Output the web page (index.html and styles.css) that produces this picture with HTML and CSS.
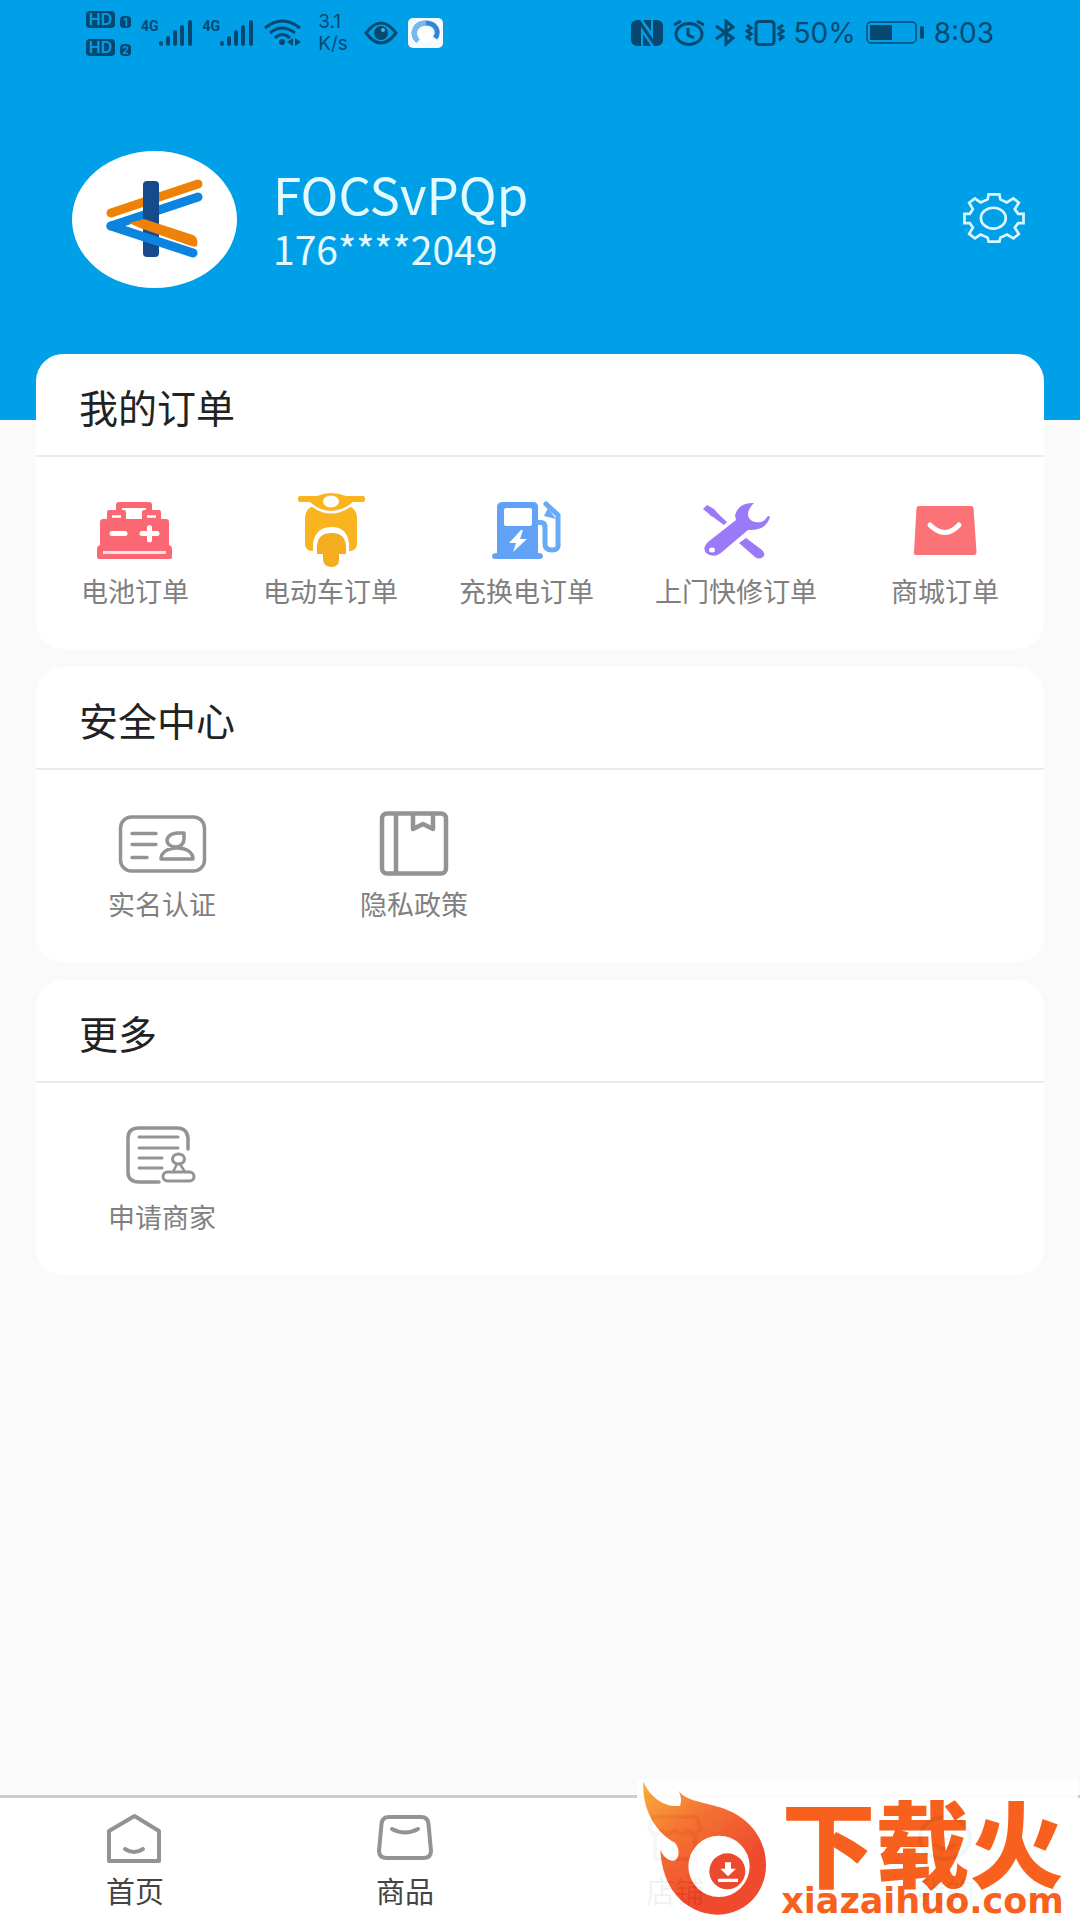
FILE: index.html
```html
<!DOCTYPE html>
<html lang="zh-CN">

<head>
    <meta charset="UTF-8">
    <meta name="viewport" content="width=device-width, initial-scale=1.0">
    <title>我的</title>
    <link rel="stylesheet" href="styles.css">
</head>

<body>
    <header class="header">
        <div class="status-bar">
            <div class="status-left">
                <div class="hd-list">
                    <div class="hd-row"><span class="hd">HD</span><span class="sim">1</span></div>
                    <div class="hd-row"><span class="hd">HD</span><span class="sim">2</span></div>
                </div>
                <div class="signal">
                    <span class="net">4G</span>
                    <svg width="34" height="26" viewBox="0 0 34 26" fill="currentColor">
                        <rect x="0" y="21" width="4" height="5" rx="2" />
                        <rect x="7" y="16" width="4" height="10" rx="2" />
                        <rect x="14" y="10" width="4" height="16" rx="2" />
                        <rect x="21" y="5" width="4" height="21" rx="2" />
                        <rect x="29" y="0" width="4" height="26" rx="2" />
                    </svg>
                </div>
                <div class="signal">
                    <span class="net">4G</span>
                    <svg width="34" height="26" viewBox="0 0 34 26" fill="currentColor">
                        <rect x="0" y="21" width="4" height="5" rx="2" />
                        <rect x="7" y="16" width="4" height="10" rx="2" />
                        <rect x="14" y="10" width="4" height="16" rx="2" />
                        <rect x="21" y="5" width="4" height="21" rx="2" />
                        <rect x="29" y="0" width="4" height="26" rx="2" />
                    </svg>
                </div>
                <svg class="wifi" width="38" height="28" viewBox="0 0 38 28" fill="none" stroke="currentColor" stroke-width="3">
                    <path d="M1 9 Q18 -5 36 9" />
                    <path d="M6 14 Q18 4 31 14" />
                    <path d="M11 19 Q18 12 26 19" />
                    <circle cx="18" cy="23" r="3" fill="currentColor" stroke="none" />
                    <path d="M29 19 v8 l-6 -4z M31 19 v8 l6 -4z" fill="currentColor" stroke="none" />
                </svg>
                <div class="speed">3.1<br>K/s</div>
                <svg class="eye" width="34" height="24" viewBox="0 0 34 24">
                    <path d="M2 12 Q17 -8 32 12 Q17 32 2 12z" fill="none" stroke="currentColor" stroke-width="3" />
                    <circle cx="17" cy="12" r="7" fill="currentColor" />
                    <circle cx="19" cy="9" r="2" fill="#4cb4e4" />
                </svg>
                <svg class="app" width="35" height="30" viewBox="0 0 35 30">
                    <rect width="35" height="30" rx="5" fill="#f4fafe" />
                    <path d="M10 23 C2 15 8 5 18 5 S32 14 27 20" fill="none" stroke="#2f86dc" stroke-width="5" />
                    <path d="M10 23 C2 15 8 5 18 5" fill="none" stroke="#79b8ef" stroke-width="5" />
                    <circle cx="17" cy="17" r="7" fill="#fff" />
                </svg>
            </div>
            <div class="status-right">
                <svg width="32" height="26" viewBox="0 0 32 26">
                    <path d="M6 0 H9 L22 19 V0 H26 Q32 1 32 6 V20 Q32 25 26 26 H23 L10 7 V26 H6 Q0 25 0 20 V6 Q0 1 6 0z M12 0 H20 V11z M12 14 L20 26 H12z" fill="currentColor" />
                </svg>
                <svg width="32" height="26" viewBox="0 0 32 26" fill="none" stroke="currentColor" stroke-width="3">
                    <ellipse cx="16" cy="14" rx="13" ry="10.5" />
                    <path d="M15 8 V15 L21 18 M1 5 L8 1 M24 1 L31 5" />
                </svg>
                <svg width="20" height="28" viewBox="0 0 20 28" fill="none" stroke="currentColor" stroke-width="3">
                    <path d="M1 7 L18 19 L11 25 V2 L18 8 L1 20" />
                </svg>
                <svg class="vibrate" width="40" height="26" viewBox="0 0 40 26" fill="none" stroke="currentColor" stroke-width="3">
                    <rect x="11" y="1.5" width="18" height="23" rx="3" />
                    <path d="M2 5 l4 3 l-4 3 l4 3 l-4 3 l4 3 M38 5 l-4 3 l4 3 l-4 3 l4 3 l-4 3" />
                </svg>
                <span class="percent">50%</span>
                <svg class="battery" width="58" height="24" viewBox="0 0 58 24">
                    <rect x="1" y="1" width="49" height="21" rx="4" fill="none" stroke="currentColor" stroke-width="1.5" />
                    <rect x="4" y="4" width="22" height="15" fill="currentColor" />
                    <rect x="54" y="5" width="4" height="13" rx="2" fill="currentColor" />
                </svg>
                <span>8:03</span>
            </div>
        </div>

        <div class="profile">
            <svg class="avatar" viewBox="0 0 165 137">
                <ellipse cx="82.5" cy="68.5" rx="82.5" ry="68.5" fill="#fff" />
                <g fill="none" stroke-width="9" stroke-linecap="round">
                    <path d="M39 75 L126 46" stroke="#0a84dc" />
                    <path d="M39 63 L126 34" stroke="#fff" stroke-width="11" />
                    <path d="M39 62 L126 33" stroke="#ee8108" />
                    <rect x="71" y="30" width="16" height="76" rx="4" fill="#154a8c" />
                    <path d="M39 75 L121 102" stroke="#0a84dc" />
                    <path d="M57 72 L72 68 L121 84 Q127 87 125 95 Q123 96 119 95 L68 77z" fill="#ee8108" />
                </g>
            </svg>
            <div class="user">
                <h1 class="user-name">FOCSvPQp</h1>
                <p class="user-phone">176****2049</p>
            </div>
            <button class="settings" type="button" aria-label="设置">
                <svg viewBox="72 68 184 149" fill="none" stroke="#d9f8ff" stroke-width="8">
                    <path d="M148 72 H180 L183 87 L202 96 L222 84 L238 97 L226 116 L236 130 H252 V158 H236 L226 171 L238 190 L222 203 L203 192 L183 201 L180 213 H148 L145 201 L124 192 L107 203 L90 190 L101 171 L92 158 H76 V130 H92 L101 116 L90 97 L107 84 L124 96 L145 87z" />
                    <ellipse cx="162" cy="143" rx="37" ry="31" />
                </svg>
            </button>
        </div>
    </header>

    <main class="content">
        <section class="card">
            <h2 class="card-title">我的订单</h2>
            <div class="orders">
                <a class="item" href="#">
                    <svg class="icon" viewBox="-5 0 90 76">
                        <path d="M24 24 V14 H54 V24" fill="none" stroke="#fa6672" stroke-width="6" stroke-linejoin="round" />
                        <path d="M12 21 q0-2 2-2 H29 q2 0 2 2 V28 H47 V21 q0-2 2-2 H64 q2 0 2 2 V28 H71 q3 0 3 3 V54 q3 1 3 4 V66 q0 2-2 2 H4 q-2 0-2-2 V58 q0-3 3-4 V31 q0-3 3-3 H12z" fill="#fb6874" />
                        <path d="M17 25.500 H26 M52 25.500 H61" stroke="#fff" stroke-width="2.500" />
                        <path d="M17 42.500 H30 M47 42.500 H62 M54.500 36.500 V49" stroke="#fff" stroke-width="5" stroke-linecap="round" />
                        <path d="M8 61.500 H71" stroke="#ffe3e5" stroke-width="3" />
                    </svg>
                    <span>电池订单</span>
                </a>
                <a class="item" href="#">
                    <svg class="icon" viewBox="-5 0 90 76">
                        <path d="M22 15 H58 Q66 18 66 28 V54 Q65 60 58 60 V52 Q56 36 40.500 36 T22 52 V60 Q15 60 14 54 V28 Q14 18 22 15z" fill="#f9b420" />
                        <path d="M9 5 H26 Q33 2 40 2 T55 5 H72 Q74 5 74 8 T72 11 H62 Q51 20 40 20 T19 11 H9 Q7 11 7 8 T9 5z" fill="#f9b420" stroke="#fff" stroke-width="5" paint-order="stroke" />
                        <ellipse cx="40" cy="10.500" rx="8" ry="6" fill="#fff" />
                        <path d="M26 63 V55 Q27 42 40.500 42 T55 55 V63 H48 V69 Q48 76 40.500 76 T32 69 V63z" fill="#f4ac20" />
                    </svg>
                    <span>电动车订单</span>
                </a>
                <a class="item" href="#">
                    <svg class="icon" viewBox="-5 0 90 76">
                        <path d="M10 62 V16 Q10 11 16 11 H46 Q51 11 51 16 V62 Q56 62 56 65 T52 68 H8 Q5 68 5 65 T10 62z" fill="#62a2f6" />
                        <rect x="17" y="17" width="28" height="18" rx="2" fill="#fff" />
                        <path d="M34 39 L22 52 H29 L26 61 L40 48 H33 L36 39z" fill="#fff" />
                        <path d="M51 31.500 H54 Q58 31.500 58 37 V53 Q58 59 65 59 T71 53 V24 L59 13" fill="none" stroke="#67aaf5" stroke-width="5" stroke-linecap="round" />
                        <path d="M61 17 L57 25 L69 28" fill="#67aaf5" />
                    </svg>
                    <span>充换电订单</span>
                </a>
                <a class="item" href="#">
                    <svg class="icon" viewBox="-5 0 90 76" fill="#9a7af8">
                        <path d="M7 18 L11 14 L18 18 Q22 23 31 31 L28 34 L17 26 Q14 25 13 23z" />
                        <path d="M50 47 L66 59 Q70 63 67 66 Q63 69 59 66 L43 52z" />
                        <path d="M58 12 Q43 11 39 24 L40 29 L12 51 Q6 57 10 62 Q18 68 26 61 L52 39 Q70 40 74 26 Q73 24 71 26 C68 31 64 32 59 31 C51 29 49 21 58 12z" />
                        <ellipse cx="16" cy="59" rx="3" ry="2.500" fill="#fff" />
                    </svg>
                    <span>上门快修订单</span>
                </a>
                <a class="item" href="#">
                    <svg class="icon" viewBox="-5 0 90 76">
                        <path d="M14 15 H66 Q68 15 68.500 17 L71.500 61 Q71.500 64 69 64 H11 Q8.500 64 9 61 L11.500 17 Q12 15 14 15z" fill="#fb7376" />
                        <path d="M25 34 Q40 49 54 34" fill="none" stroke="#fff" stroke-width="5" stroke-linecap="round" />
                    </svg>
                    <span>商城订单</span>
                </a>
            </div>
        </section>

        <section class="card">
            <h2 class="card-title">安全中心</h2>
            <div class="grid">
                <a class="item" href="#">
                    <svg class="icon line-icon" viewBox="0 0 90 76">
                        <rect x="3.500" y="13" width="84" height="54" rx="11" />
                        <path d="M15 29.500 H39 M15 40.500 H39 M15 53.500 H30" />
                        <path d="M67 29 H61 C54 29 50 33 50 36.500 S54 43 59 43 S67 39 67 35z M44 55 C44 48 51 44 60 44 S76 48 76 55z" />
                    </svg>
                    <span>实名认证</span>
                </a>
                <a class="item" href="#">
                    <svg class="icon line-icon" viewBox="0 0 90 76">
                        <rect x="13" y="9.500" width="64" height="60" rx="5" stroke-width="4.500" />
                        <path d="M27 10 V69 M44 10 V25 L54 20 L64 25 V10" stroke-width="4.500" />
                    </svg>
                    <span>隐私政策</span>
                </a>
            </div>
        </section>

        <section class="card">
            <h2 class="card-title">更多</h2>
            <div class="grid">
                <a class="item" href="#">
                    <svg class="icon line-icon" viewBox="0 0 90 76">
                        <path d="M71 32 V21 Q70 11 60 11 H22 Q11 11 11 21 V55 Q11 65 22 65 H42" />
                        <path d="M22 20 H61 M22 31 H61 M22 41 H45 M22 51 H45" stroke-width="3" />
                        <ellipse cx="61.500" cy="42" rx="6" ry="5" stroke-width="3" />
                        <path d="M60 47 L56 55 M63 47 L68 55" stroke-width="2.500" />
                        <rect x="46" y="55" width="31" height="9" rx="4.500" stroke-width="3" />
                    </svg>
                    <span>申请商家</span>
                </a>
            </div>
        </section>
    </main>

    <nav class="tab-bar">
        <a class="tab" href="#">
            <svg class="tab-icon" viewBox="0 0 60 56">
                <path d="M29.500 6 L54 21 V51 H4 V21z" />
                <path d="M20 39 Q29 45 38 39" />
            </svg>
            <span>首页</span>
        </a>
        <a class="tab" href="#">
            <svg class="tab-icon" viewBox="0 0 60 56">
                <path d="M14 7 H46 Q53 7 53.500 14 L56 41 Q56 48 48 48 H12 Q4 48 4 41 L6.500 14 Q7 7 14 7z" />
                <path d="M17 19 Q30 26 43 19" />
            </svg>
            <span>商品</span>
        </a>
        <a class="tab" href="#">
            <svg class="tab-icon" viewBox="0 0 60 56">
                <path d="M8 7 H52 L56 19 Q49 28 43 20 Q36 28 30 20 Q23 28 17 20 Q10 28 4 19z M10 26 V49 H50 V26" />
            </svg>
            <span>店铺</span>
        </a>
        <a class="tab active" href="#">
            <svg class="tab-icon" viewBox="0 0 60 56">
                <ellipse cx="30" cy="28" rx="25" ry="21" />
                <path d="M20 35 Q30 42 40 35" />
            </svg>
            <span>我的</span>
        </a>
        <div class="download-logo">
            <svg class="flame" viewBox="51 27 390 423">
                <defs>
                    <linearGradient id="fire" x1="0" y1="0" x2="0.6" y2="0.8">
                        <stop offset="0" stop-color="#fbab2c" />
                        <stop offset="0.45" stop-color="#f56a24" />
                        <stop offset="1" stop-color="#ee3c1f" />
                    </linearGradient>
                </defs>
                <path d="M70 35 C90 80 130 112 180 108 C186 90 182 75 176 62 C200 95 250 95 300 112 C390 140 440 210 438 290 C435 375 370 435 290 434 C190 430 125 350 121 238 C130 262 145 273 160 272 C180 270 180 235 165 218 C110 190 65 120 70 35z" fill="url(#fire)" />
                <circle cx="297" cy="289" r="92" fill="#fff" />
                <circle cx="322" cy="304" r="54" fill="#ea3d20" />
                <path d="M315 277 H333 V296 H348 L324 319 L301 296 H315z M294 326 H354 V336 H294z" fill="#fff" />
            </svg>
            <div class="download-text">
                <strong class="download-name">下载火</strong>
                <span class="download-url">xiazaihuo.com</span>
            </div>
        </div>
    </nav>
</body>

</html>
```

FILE: styles.css
```css
* {
    margin: 0;
    padding: 0;
    box-sizing: border-box;
}

body {
    font-family: "Noto Sans CJK SC", sans-serif;
    background-color: #fafafa;
    display: flex;
    flex-direction: column;
    min-height: 100vh;
}

a {
    color: inherit;
    text-decoration: none;
}

svg {
    display: block;
    flex-shrink: 0;
}

/* header */
.header {
    background-color: #00a0e9;
    height: 420px;
}

.status-bar {
    display: flex;
    justify-content: space-between;
    align-items: center;
    height: 66px;
    padding: 0 86px;
    color: #06486f;
    font-family: Inter, sans-serif;
    font-size: 28px;
}

.status-left,
.status-right {
    display: flex;
    align-items: center;
    gap: 10px;
}

.hd-list {
    display: flex;
    flex-direction: column;
    gap: 11px;
}

.hd-row {
    display: flex;
    align-items: flex-end;
    gap: 5px;
}

.hd,
.sim {
    background-color: #06486f;
    color: #00a0e9;
    border-radius: 4px;
    font-weight: 600;
    text-align: center;
}

.hd {
    width: 29px;
    font-size: 16px;
    line-height: 17px;
}

.sim {
    width: 11px;
    font-size: 11px;
    line-height: 12px;
}

.signal {
    display: flex;
    align-items: flex-start;
}

.net {
    font-family: Roboto, sans-serif;
    font-size: 14px;
    line-height: 12px;
    font-weight: 700;
}

.speed {
    font-size: 19px;
    line-height: 22px;
    margin: 0 6px;
}

.percent {
    margin-left: -2px;
}

.profile {
    display: flex;
    align-items: center;
    padding: 85px 55px 0 72px;
}

.avatar {
    width: 165px;
    height: 137px;
}

.user {
    flex: 1;
    margin-left: 36px;
    padding-bottom: 2px;
    color: #e3faff;
}

.user-name {
    font-size: 51px;
    line-height: 54px;
    font-weight: 400;
    margin-bottom: 4px;
}

.user-phone {
    font-size: 39px;
    line-height: 48px;
}

.settings {
    width: 62px;
    height: 50px;
    margin-bottom: 4px;
    border: none;
    background: none;
    cursor: pointer;
}

.settings svg {
    width: 100%;
    height: 100%;
}

/* cards */
.content {
    display: flex;
    flex-direction: column;
    gap: 18px;
    margin-top: -66px;
    padding: 0 36px;
}

.card {
    background-color: #fff;
    border-radius: 27px;
}

.card-title {
    padding: 27px 43px 24px;
    border-bottom: 2px solid #ebebeb;
    color: #222;
    font-size: 39px;
    line-height: 50px;
    font-weight: 400;
}

.orders {
    display: flex;
    justify-content: space-between;
    padding: 34px 32px 42px;
}

.grid {
    display: grid;
    grid-template-columns: repeat(4, 1fr);
    padding: 34px 0 42px;
}

.item {
    display: flex;
    flex-direction: column;
    align-items: center;
    gap: 8px;
    min-width: 134px;
    color: #808080;
    font-size: 27px;
    line-height: 32px;
}

.icon {
    width: 90px;
    height: 76px;
}

.line-icon {
    fill: none;
    stroke: #939393;
    stroke-width: 3.5;
    stroke-linecap: round;
    stroke-linejoin: round;
}

/* bottom tabs */
.tab-bar {
    position: relative;
    display: flex;
    margin-top: auto;
    border-top: 3px solid #ccc;
    background-color: #fff;
}

.tab {
    flex: 1;
    display: flex;
    flex-direction: column;
    align-items: center;
    gap: 8px;
    padding: 12px 0 14px;
    color: #444;
    font-size: 29px;
    line-height: 32px;
}

.tab-icon {
    width: 60px;
    height: 56px;
    fill: none;
    stroke: #939393;
    stroke-width: 4;
    stroke-linecap: round;
    stroke-linejoin: round;
}

.active {
    color: #00a0e9;
}

.active .tab-icon {
    stroke: #00a0e9;
}

.download-logo {
    position: absolute;
    right: 2px;
    bottom: 0;
    display: flex;
    width: 441px;
    height: 141px;
    background-color: #fff;
    opacity: 0.93;
}

.flame {
    width: 130px;
    height: 141px;
}

.download-text {
    flex: 1;
    display: flex;
    flex-direction: column;
    align-items: center;
    color: #f8560c;
    white-space: nowrap;
}

.download-name {
    font-size: 94px;
    line-height: 94px;
    font-weight: 900;
    margin-top: 14px;
}

.download-url {
    font-family: "DejaVu Sans", sans-serif;
    font-size: 35px;
    line-height: 32px;
    font-weight: 700;
    margin-top: -2px;
}
```
